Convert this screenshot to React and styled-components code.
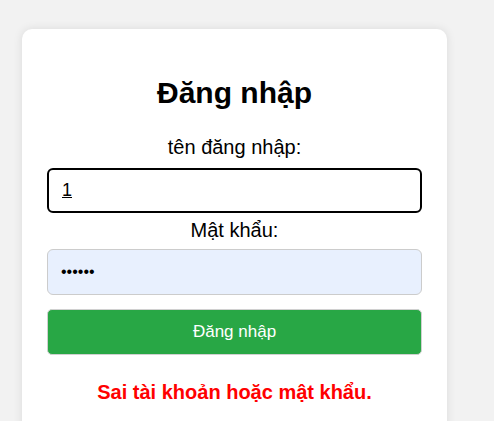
import React from 'react';
import styled, { createGlobalStyle } from 'styled-components';

const GlobalStyle = createGlobalStyle`
    body {
        margin: 0;
        background: #f2f2f2;
        font-family: "Liberation Sans", Arial, sans-serif;
    }
`

const Login = () => {

    return (
        <React.Fragment>
            <GlobalStyle />
            <Page>
                <Card>
                    <Title>Đăng nhập</Title>
                    <Form onSubmit={e => e.preventDefault()}>
                        <Label>tên đăng nhập:</Label>
                        <Input type='text' defaultValue='1' focused />
                        <Label>Mật khẩu:</Label>
                        <Input type='password' defaultValue='123456' filled />
                        <Submit>Đăng nhập</Submit>
                    </Form>
                    <Error>Sai tài khoản hoặc mật khẩu.</Error>
                </Card>
            </Page>
        </React.Fragment>
    )
}

export default Login;

const Page = styled.div`
    padding: 29px 0 0 22px;
`

const Card = styled.div`
    width: 425px;
    box-sizing: border-box;
    padding: 47px 25px 40px;
    background: #fff;
    border-radius: 10px;
    box-shadow: 0 0 10px rgba(0, 0, 0, 0.1);
    text-align: center;
`

const Title = styled.h2`
    margin: 0 0 26px;
    font-size: 30px;
    line-height: 34px;
    font-weight: bold;
    color: #000;
`

const Form = styled.form`
    display: flex;
    flex-direction: column;
`

const Label = styled.label`
    display: block;
    font-size: 20px;
    line-height: 23px;
    color: #000;
    margin-bottom: 9px;

    & + input + & {
        margin-top: 6px;
        margin-bottom: 7px;
    }
`

const Input = styled.input.withConfig({
    shouldForwardProp: p => !['focused', 'filled'].includes(p),
})`
    box-sizing: border-box;
    width: 100%;
    height: ${p => p.filled ? '46px' : '45px'};
    padding: 0 13px;
    font-family: "Liberation Sans", Arial, sans-serif;
    font-size: ${p => p.filled ? '16px' : '18px'};
    color: #000;
    border-radius: 6px;
    outline: none;
    border: ${p => p.focused ? '2px solid #000' : '1px solid #ccc'};
    background: ${p => p.filled ? '#e8f0fe' : '#fff'};
    text-decoration: ${p => p.focused ? 'underline' : 'none'};
`

const Submit = styled.button`
    box-sizing: border-box;
    width: 100%;
    height: 46px;
    margin-top: 14px;
    border: 1px solid #d0d0d0;
    border-radius: 5px;
    background: #28a745;
    color: #fff;
    font-family: "Liberation Sans", Arial, sans-serif;
    font-size: 17px;
`

const Error = styled.p`
    margin: 26px 0 0;
    color: #ff0000;
    font-size: 20px;
    line-height: 23px;
    font-weight: bold;
`
